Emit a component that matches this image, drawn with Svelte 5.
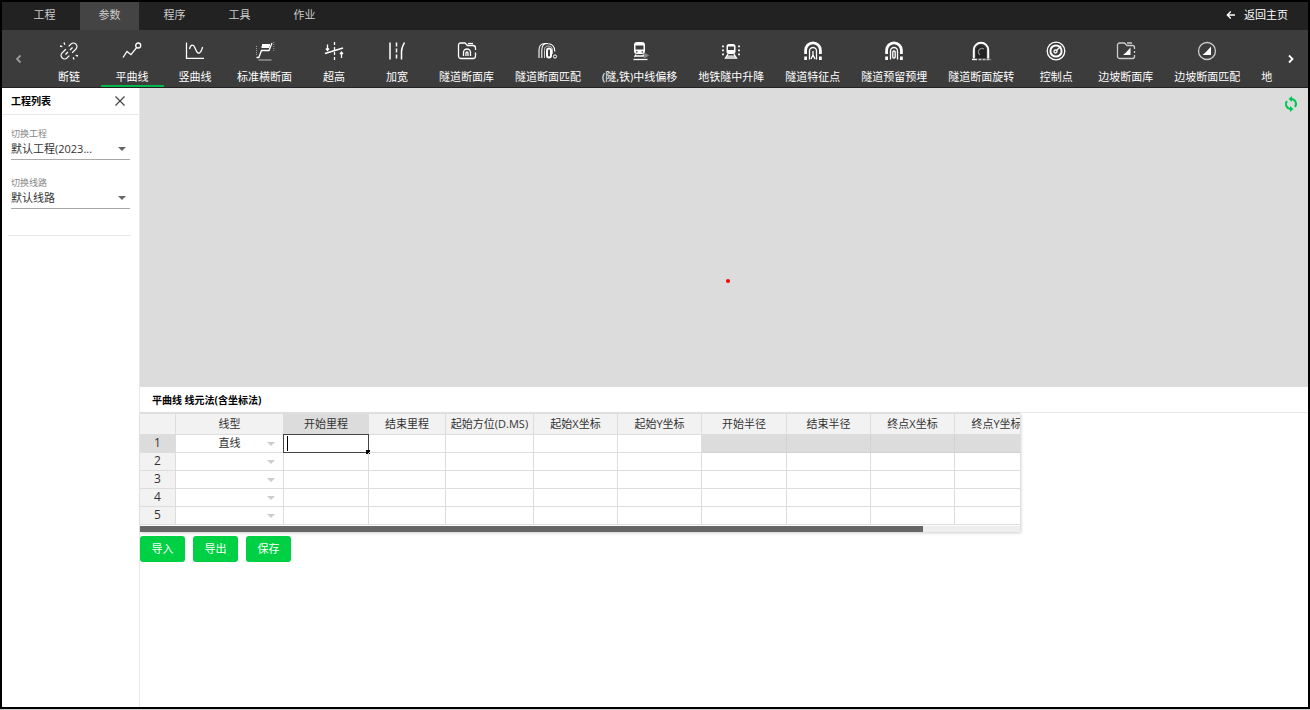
<script>
  const tabs = ["工程", "参数", "程序", "工具", "作业"];
  let activeTab = $state("参数");

  // 20x20 line icons, drawn in the text colour
  const icons = {
    unlink: `<g transform="rotate(-45 10 10)"><path d="M9 6.500H3.800a3.400 3.400 0 0 0 0 7H7M11 13.500h5.200a3.400 3.400 0 0 0 0-7H13M5 10h3.500M11.500 10H15"/></g><path d="M5 1.500l.8 2.200M1 5l2.300.6M15 18.500l-.8-2.200M19 15l-2.300-.6"/>`,
    polyline: `<path d="M1 16.500l4-6 4 3.200 5.600-7"/><circle cx="16.200" cy="4.500" r="2.500"/>`,
    curve: `<path d="M1.500 1.500v15.800H19M4.500 8c1.200-5 4-5 5.500-1s4 8.500 6.800 1.500l.8-2.500"/>`,
    section: `<path d="M1.500 16.500h2.300L6.500 9.500h7.500L17 2"/><path d="M7 4h8M6.500 6h8" stroke-width="1.800"/><path d="M3.500 19h13" opacity=".5"/><path d="M1.500 5v9M18.800 1v9" stroke-dasharray="1 1" stroke-width="1" opacity=".5"/>`,
    superelev: `<path d="M1 12.500l18-5.500" stroke-width="1.600"/><path d="M10.500 1v18" stroke-dasharray="3 2"/><path d="M3.500 3.500v6M2 7.500l1.500 2L5 7.500M17.500 17v-6M16 13l1.500-2 1.500 2"/>`,
    widen: `<path d="M3 1.500v17M17.500 1.500c-2 3.500-3 6-3 9v8" stroke-width="1.500"/><path d="M9.500 1.500v17" stroke-width="1.500" stroke-dasharray="4 2"/>`,
    tunnelFolder: `<path d="M18.500 11.500V15a2.500 2.500 0 0 1-2.500 2.500H4A2.500 2.500 0 0 1 1.500 15V4A2 2 0 0 1 3.500 2H8l2.500 2.500H16a2.500 2.500 0 0 1 2.500 2.500v2"/><path d="M11 2.500h5"/><path d="M6.500 15v-3.500a3.500 3.500 0 0 1 7 0V15M9 15v-3a1 1 0 0 1 2 0v3"/>`,
    tunnelMatch: `<path d="M1 17V9c0-4 2-6.500 6-6.500h3M3.800 17V9c0-4 2-6.500 5-6.500 5 0 8 2 8 8" stroke-width="1.100"/><path d="M6.500 17V9.500C6.500 6 8 5 10.500 5s4 1.500 4 5v3" stroke-width="1" opacity=".7"/><rect x="9" y="7.500" width="4" height="9" rx="2" stroke-width="2"/><circle cx="17" cy="15.500" r="1.600" stroke-width="1"/>`,
    trainShift: `<rect x="4" y="1" width="11" height="12" rx="3" fill="#fff" stroke="none"/><path d="M5.500 4.500h8v4h-8z" fill="#3c3c3c" stroke="none"/><path d="M6 10.800h1.500M11.500 10.800H13" stroke="#3c3c3c"/><path d="M6 13.500l-1.500 2.300M13 13.500l1 2M5.500 15h8"/><path d="M3.500 18.500h14"/><path d="M14.500 12.500l3.500 2-3.500 2z" fill="#888" stroke="#888"/>`,
    trainLift: `<rect x="5.500" y="3" width="9" height="10" rx="2.500" fill="#fff" stroke="none"/><path d="M7 5.500h6V9H7z" fill="#3c3c3c" stroke="none"/><path d="M7 13l-2.500 4h11L13 13M6 15.200h8"/><path d="M2 4.500v10M18 4.500v10" stroke-width="1.800" stroke-dasharray="1.800 2.200"/>`,
    tunnelPoint: `<path d="M2.600 13V9.300a7.400 7.400 0 0 1 14.800 0V13M2.600 15.500V19M17.400 15.500V19" stroke-width="2.800"/><path d="M6.500 18.500V10a3.500 3.500 0 0 1 7 0v8.500M10 10v4l-2 4M10 14l2 4"/>`,
    tunnelEmbed: `<path d="M2.600 13V9.300a7.400 7.400 0 0 1 14.800 0V13M2.600 15.500V19M17.400 15.500V19" stroke-width="2.800"/><path d="M6.500 18.500V10a3.500 3.500 0 0 1 7 0v8.500"/><rect x="8.800" y="10" width="2.400" height="7" rx="1"/>`,
    tunnelRotate: `<path d="M5 17V9.500a5 5 0 0 1 10 0V17z" fill="#222" stroke="none"/><path d="M2.800 17.500V9a7.200 7.200 0 0 1 14.400 0v8.500" stroke-width="2"/><path d="M13 8a3.600 3.600 0 1 0-4 6" stroke="#888"/><path d="M1 18.500h5"/><path d="M7.500 18.500H20" stroke-dasharray="3 1" opacity=".7"/>`,
    control: `<circle cx="10" cy="10" r="8.800"/><circle cx="10" cy="10" r="5.600" stroke-width="2"/><circle cx="9.500" cy="10.500" r="1.500"/><path d="M10.500 9.500l4.500-4.500"/>`,
    slopeFolder: `<path d="M18.500 14v1.500a2 2 0 0 1-2 2h-13a2 2 0 0 1-2-2V4a2 2 0 0 1 2-2h5L11 4.500h5.500A2 2 0 0 1 18.500 6.500V8M18.500 10v2M11 2h5" stroke="#ccc"/><path d="M7 14l3-2.500L14.500 6.500V14z" fill="#fff" stroke="none"/>`,
    slopeMatch: `<circle cx="10" cy="10" r="8.500" stroke="#ccc"/><path d="M5.500 14l3.500-3L14 5.500V14z" fill="#fff" stroke="none"/>`,
  };

  const tools = [
    { label: "断链", icon: "unlink" },
    { label: "平曲线", icon: "polyline" },
    { label: "竖曲线", icon: "curve" },
    { label: "标准横断面", icon: "section" },
    { label: "超高", icon: "superelev" },
    { label: "加宽", icon: "widen" },
    { label: "隧道断面库", icon: "tunnelFolder" },
    { label: "隧道断面匹配", icon: "tunnelMatch" },
    { label: "(隧,铁)中线偏移", icon: "trainShift" },
    { label: "地铁隧中升降", icon: "trainLift" },
    { label: "隧道特征点", icon: "tunnelPoint" },
    { label: "隧道预留预埋", icon: "tunnelEmbed" },
    { label: "隧道断面旋转", icon: "tunnelRotate" },
    { label: "控制点", icon: "control" },
    { label: "边坡断面库", icon: "slopeFolder" },
    { label: "边坡断面匹配", icon: "slopeMatch" },
  ];
  let activeTool = $state("平曲线");

  const columns = [
    { title: "线型", width: 108 },
    { title: "开始里程", width: 85 },
    { title: "结束里程", width: 77 },
    { title: "起始方位(D.MS)", width: 88 },
    { title: "起始X坐标", width: 84 },
    { title: "起始Y坐标", width: 84 },
    { title: "开始半径", width: 85 },
    { title: "结束半径", width: 84 },
    { title: "终点X坐标", width: 84 },
    { title: "终点Y坐标", width: 84 },
  ];
  const rows = [{ type: "直线" }, { type: "" }, { type: "" }, { type: "" }, { type: "" }];

  // a straight line has no radius and no end point of its own
  const isLocked = (row, col) => row.type === "直线" && col >= 6;
</script>

<div class="app">
  <nav class="tabs">
    {#each tabs as tab}
      <button type="button" class="tab" class:active={tab === activeTab} onclick={() => (activeTab = tab)}>{tab}</button>
    {/each}
    <a class="home" href="#home">
      <svg viewBox="0 0 10 10" width="10" height="10" aria-hidden="true"><path d="M9 5H1.500M4.800 1.500L1.300 5l3.500 3.500" /></svg>
      返回主页
    </a>
  </nav>

  <div class="toolbar">
    <button type="button" class="scroll dim" aria-label="向左">
      <svg viewBox="0 0 10 10" width="10" height="10"><path d="M6.500 1.500L3 5l3.500 3.500" /></svg>
    </button>
    <div class="tools">
      {#each tools as tool}
        <button type="button" class="tool" class:active={tool.label === activeTool} onclick={() => (activeTool = tool.label)}>
          <svg viewBox="0 0 20 20" width="20" height="20" aria-hidden="true">{@html icons[tool.icon]}</svg>
          <span>{tool.label}</span>
        </button>
      {/each}
      <button type="button" class="tool last"><span>地</span></button>
    </div>
    <button type="button" class="scroll" aria-label="向右">
      <svg viewBox="0 0 10 10" width="10" height="10"><path d="M3 1.500L6.500 5 3 8.500" /></svg>
    </button>
  </div>

  <div class="body">
    <aside class="sidebar">
      <header class="side-head">
        <h2>工程列表</h2>
        <button type="button" class="close" aria-label="关闭">
          <svg viewBox="0 0 12 12" width="12" height="12"><path d="M1.500 1.500l9 9M10.500 1.500l-9 9" /></svg>
        </button>
      </header>
      <div class="fields">
        <div class="field">
          <label for="project">切换工程</label>
          <select id="project"><option>默认工程(2023...</option></select>
        </div>
        <div class="field">
          <label for="route">切换线路</label>
          <select id="route"><option>默认线路</option></select>
        </div>
      </div>
      <hr />
    </aside>

    <main class="main">
      <section class="map">
        <span class="origin"></span>
        <button type="button" class="refresh" aria-label="刷新">
          <svg viewBox="0 0 16 16" width="16" height="16">
            <path class="arc" d="M8 3a5 5 0 0 1 4 8M8 13a5 5 0 0 1-4-8" />
            <path class="head" d="M9 0v6L5.500 3zM7 16v-6l3.500 3z" />
          </svg>
        </button>
      </section>

      <section class="panel">
        <h2 class="title">平曲线 线元法(含坐标法)</h2>
        <div class="sheet">
          <div class="viewport">
            <table>
              <colgroup>
                <col class="num" />
                {#each columns as col}
                  <col style:width="{col.width}px" />
                {/each}
              </colgroup>
              <thead>
                <tr>
                  <th></th>
                  {#each columns as col, c}
                    <th scope="col" class:current={c === 1}>{col.title}</th>
                  {/each}
                </tr>
              </thead>
              <tbody>
                {#each rows as row, r}
                  <tr>
                    <th scope="row" class:current={r === 0}>{r + 1}</th>
                    {#each columns as col, c}
                      {#if c === 0}
                        <td class="choice">
                          <select class="type" aria-label="线型 {r + 1}"><option>{row.type}</option></select>
                        </td>
                      {:else if r === 0 && c === 1}
                        <td class="editing"><input type="text" aria-label={col.title} /></td>
                      {:else}
                        <td class:locked={isLocked(row, c)}></td>
                      {/if}
                    {/each}
                  </tr>
                {/each}
              </tbody>
            </table>
          </div>
          <div class="track"><div class="thumb"></div></div>
        </div>
        <div class="actions">
          <button type="button">导入</button>
          <button type="button">导出</button>
          <button type="button">保存</button>
        </div>
      </section>
    </main>
  </div>
</div>

<style>
  :global(body) {
    background: #ccc;
  }

  .app {
    box-sizing: border-box;
    height: calc(100vh - 1px);
    display: flex;
    flex-direction: column;
    border: 2px solid #000;
    background: #fff;
    color: #333;
    font-family: "Open Sans", "Noto Sans CJK SC", sans-serif;
    font-size: 11px;
    line-height: 16px;
  }

  button,
  select,
  input {
    margin: 0;
    padding: 0;
    border: 0;
    border-radius: 0;
    background: none;
    color: inherit;
    font: inherit;
  }

  button {
    cursor: pointer;
  }

  select {
    appearance: none;
  }

  svg {
    display: block;
    fill: none;
    stroke: currentColor;
    stroke-width: 1.3;
  }

  h2 {
    margin: 0;
    color: #000;
    font-size: 10px;
    font-weight: 700;
  }

  .tabs {
    display: flex;
    flex: none;
    height: 28px;
    gap: 6px;
    padding: 0 20px 0 13px;
    background: #222;
    color: #ccc;
  }

  .tab {
    width: 59px;
    padding-bottom: 3px;
  }

  .tab.active {
    background: #444;
  }

  .home {
    display: flex;
    align-items: center;
    gap: 8px;
    margin-left: auto;
    padding-bottom: 3px;
    color: #fff;
    text-decoration: none;
  }

  .toolbar {
    display: flex;
    flex: none;
    height: 57px;
    border-bottom: 1px solid #222;
    background: #3c3c3c;
    color: #fff;
  }

  .scroll {
    display: flex;
    flex: none;
    align-items: center;
    justify-content: center;
    width: 34px;
  }

  .scroll svg {
    stroke-width: 1.8;
  }

  .scroll.dim {
    color: #999;
  }

  .tools {
    display: flex;
    flex: 1;
    min-width: 0;
    padding-left: 2px;
    overflow: hidden;
  }

  .tool {
    box-sizing: border-box;
    display: flex;
    flex: none;
    flex-direction: column;
    align-items: center;
    justify-content: flex-end;
    gap: 8px;
    min-width: 63px;
    padding: 0 11px 0 10px;
    border-bottom: 2px solid transparent;
    white-space: nowrap;
  }

  .tool.active {
    border-color: #00b84a;
  }

  .tool.last {
    min-width: 0;
  }

  .body {
    display: flex;
    flex: 1;
    min-height: 0;
  }

  .sidebar {
    flex: none;
    width: 137px;
    border-right: 1px solid #e8e8e8;
  }

  .side-head {
    display: flex;
    align-items: center;
    justify-content: space-between;
    height: 26px;
    padding: 0 13px 0 9px;
    border-bottom: 1px solid #e8e8e8;
  }

  .close {
    color: #444;
  }

  .close svg {
    stroke-width: 1.2;
  }

  .fields {
    display: flex;
    flex-direction: column;
    gap: 17px;
    padding: 13px 9px 0;
  }

  .field {
    position: relative;
    display: flex;
    flex-direction: column;
    border-bottom: 1px solid #aaa;
  }

  .field label {
    color: #888;
    font-size: 9px;
    line-height: 12px;
  }

  .field select {
    height: 19px;
    padding-bottom: 1px;
  }

  .field::after,
  .choice::after {
    content: "";
    position: absolute;
    border: 4px solid transparent;
    border-top-color: #666;
    border-bottom: 0;
    pointer-events: none;
  }

  .field::after {
    right: 4px;
    bottom: 8px;
  }

  hr {
    margin: 26px 8px 0 6px;
    border: 0;
    border-top: 1px solid #e8e8e8;
  }

  .main {
    display: flex;
    flex: 1;
    flex-direction: column;
    min-width: 0;
  }

  .map {
    position: relative;
    flex: 14;
    background: #dcdcdc;
  }

  .origin {
    position: absolute;
    left: 50.2%;
    top: 64%;
    width: 4px;
    height: 4px;
    border-radius: 50%;
    background: #f00;
  }

  .refresh {
    position: absolute;
    top: 8px;
    right: 9px;
    color: #00c853;
  }

  .refresh .arc {
    stroke-width: 2;
  }

  .refresh .head {
    fill: currentColor;
    stroke: none;
  }

  .panel {
    flex: 15;
  }

  .title {
    padding: 5px 12px 4px;
    border-bottom: 1px solid #e8e8e8;
  }

  .sheet {
    width: 75.3%;
    box-shadow: 1px 1px 3px rgba(0, 0, 0, 0.2);
  }

  .viewport {
    overflow-x: auto;
    scrollbar-width: none;
  }

  table {
    width: 879px;
    table-layout: fixed;
    border-collapse: separate;
    border-spacing: 0;
  }

  .num {
    width: 36px;
  }

  th,
  td {
    box-sizing: border-box;
    height: 18px;
    padding: 0;
    border-right: 1px solid #ddd;
    border-bottom: 1px solid #ddd;
    font-weight: 400;
    text-align: center;
    line-height: 16px;
    white-space: nowrap;
  }

  th {
    background: #f2f2f2;
  }

  thead th {
    height: 22px;
    border-top: 1px solid #ddd;
  }

  tbody th {
    font-size: 12px;
  }

  .current {
    background: #dcdcdc;
  }

  .locked {
    border-color: #d2d2d2;
    background: #dcdcdc;
  }

  td {
    position: relative;
  }

  .type {
    display: block;
    width: 100%;
    height: 17px;
    text-align: center;
    text-align-last: center;
  }

  .choice::after {
    right: 8px;
    top: 7px;
    border-top-color: #ccc;
  }

  .editing input {
    box-sizing: border-box;
    display: block;
    width: 100%;
    height: 17px;
    padding: 0 4px;
    outline: 1px solid #444;
  }

  /* text caret */
  .editing::before {
    content: "";
    position: absolute;
    left: 3px;
    top: 1px;
    width: 1px;
    height: 15px;
    background: #000;
  }

  /* fill handle */
  .editing::after {
    content: "";
    position: absolute;
    right: -2px;
    bottom: -2px;
    width: 4px;
    height: 4px;
    background: #000;
  }

  .track {
    margin-top: 1px;
    background: #eee;
  }

  .thumb {
    width: 89%;
    height: 6px;
    background: #666;
  }

  .actions {
    display: flex;
    gap: 8px;
    padding-top: 4px;
  }

  .actions button {
    width: 45px;
    height: 26px;
    border-radius: 3px;
    background: #00d043;
    color: #fff;
  }
</style>
